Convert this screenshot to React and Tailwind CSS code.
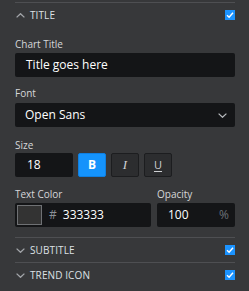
const Chevron = ({ up }) => (
  <svg width="9" height="5" viewBox="0 0 9 5" className="ml-[1px] shrink-0">
    <path
      d={up ? "M0.6 4.4 L4.5 0.7 L8.4 4.4" : "M0.6 0.6 L4.5 4.3 L8.4 0.6"}
      fill="none"
      stroke="#a3a6aa"
      strokeWidth="1.3"
    />
  </svg>
);

const Checkbox = () => (
  <div className="w-[10px] h-[10px] bg-[#1b93ff] flex items-center justify-center">
    <svg width="8" height="8" viewBox="0 0 8 8">
      <path d="M1 4.3 L3.1 6.2 L7 1.8" fill="none" stroke="#ffffff" strokeWidth="1.4" />
    </svg>
  </div>
);

const SectionHeader = ({ title, open }) => (
  <div className="border-t border-[#4e4f52] h-[25px] flex items-center justify-between">
    <div className="flex items-center gap-[5px]">
      <Chevron up={open} />
      <span className="text-[10px] leading-[14px] text-[#dde1e5] tracking-[0.1px]">{title}</span>
    </div>
    <Checkbox />
  </div>
);

const Label = ({ children, className = "" }) => (
  <div className={`text-[10px] leading-[14px] text-[#d6d7d9] ${className}`}>{children}</div>
);

const Box = ({ children, className = "" }) => (
  <div className={`h-[24px] bg-[#141517] rounded-[2px] flex items-center text-[12px] text-white ${className}`}>
    {children}
  </div>
);

export default function App() {
  return (
    <div
      className="w-[249px] h-[291px] bg-[#37383a] overflow-hidden pt-[2px]"
      style={{ fontFamily: '"Open Sans", "Liberation Sans", sans-serif' }}
    >
      <div className="ml-[15px] w-[220px]">
        <SectionHeader title="TITLE" open />
        <div className="pt-[10px] pb-[10px]">
          <Label>Chart Title</Label>
          <Box className="mt-[2px] pl-[11px]">Title goes here</Box>

          <Label className="mt-[9px]">Font</Label>
          <Box className="mt-[3px] pl-[10px] pr-[8px] justify-between">
            <span>Open Sans</span>
            <svg width="9" height="5" viewBox="0 0 9 5">
              <path d="M0.6 0.6 L4.5 4.3 L8.4 0.6" fill="none" stroke="#b8bbbf" strokeWidth="1.2" />
            </svg>
          </Box>

          <Label className="mt-[11px]">Size</Label>
          <div className="mt-[1px] flex gap-[5px]">
            <Box className="w-[58px] pl-[12px]">18</Box>
            <button className="w-[28px] h-[24px] rounded-[2px] bg-[#1593fb] border border-[#0f7fe0] text-white text-[12px] font-bold flex items-center justify-center">
              B
            </button>
            <button
              className="w-[28px] h-[24px] rounded-[2px] bg-[#2c2d2f] border border-[#1c1d1f] text-[#cfd1d4] text-[13px] italic flex items-center justify-center"
              style={{ fontFamily: '"Liberation Serif", serif' }}
            >
              I
            </button>
            <button className="w-[28px] h-[24px] rounded-[2px] bg-[#2c2d2f] border border-[#1c1d1f] text-[#cfd1d4] text-[11px] underline underline-offset-2 flex items-center justify-center">
              U
            </button>
          </div>

          <div className="mt-[10px] flex gap-[6px]">
            <Label className="w-[136px]">Text Color</Label>
            <Label>Opacity</Label>
          </div>
          <div className="mt-[2px] flex gap-[6px]">
            <Box className="w-[136px] pl-[2px]">
              <div className="w-[25px] h-[20px] bg-[#333333] border border-[#6f7174]" />
              <span className="ml-[7px] text-[#8b9096]">#</span>
              <span className="ml-[6px]">333333</span>
            </Box>
            <Box className="w-[78px] pl-[11px] pr-[6px] justify-between">
              <span>100</span>
              <span className="text-[12px] text-[#6d7277]">%</span>
            </Box>
          </div>
        </div>
        <SectionHeader title="SUBTITLE" />
        <SectionHeader title="TREND ICON" />
      </div>
    </div>
  );
}
